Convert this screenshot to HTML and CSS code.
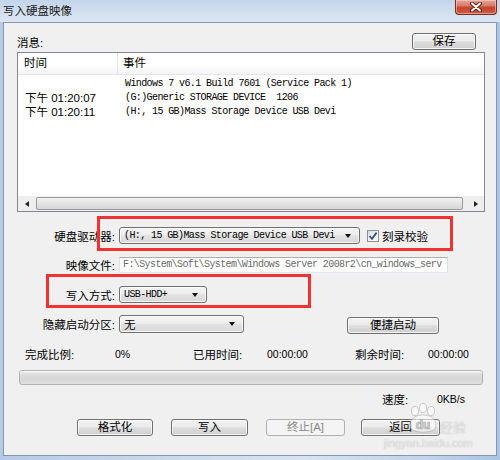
FILE: index.html
```html
<!DOCTYPE html>
<html>
<head>
<meta charset="utf-8">
<title>写入硬盘映像</title>
<link rel="stylesheet" href="styles.css">
</head>
<body>
<div class="window">
  <div class="titlebar">
    <span class="title">写入硬盘映像</span>
    <span class="close"><svg width="14" height="10" viewBox="0 0 14 10"><path d="M3 1.5 L11 8.5 M11 1.5 L3 8.5" stroke="#5a1a12" stroke-width="4" stroke-linecap="round"/><path d="M3 1.5 L11 8.5 M11 1.5 L3 8.5" stroke="#fff" stroke-width="2.2" stroke-linecap="round"/></svg></span>
  </div>
  <div class="client">
    <div class="msg-row">
      <span>消息:</span>
      <button class="btn btn-save">保存</button>
    </div>
    <div class="listbox">
      <div class="lv-head">
        <div class="col-time">时间</div>
        <div class="col-event">事件</div>
      </div>
      <div class="lv-body">
        <div class="lv-row"><div class="col-time"></div><div class="col-event mono">Windows 7 v6.1 Build 7601 (Service Pack 1)</div></div>
        <div class="lv-row"><div class="col-time">下午 01:20:07</div><div class="col-event mono">(G:)Generic STORAGE DEVICE  1206</div></div>
        <div class="lv-row"><div class="col-time">下午 01:20:11</div><div class="col-event mono">(H:, 15 GB)Mass Storage Device USB Devi</div></div>
      </div>
      <div class="hscroll">
        <span class="sarrow"><i class="tri-left"></i></span>
        <span class="thumb"></span>
        <span class="sarrow"><i class="tri-right"></i></span>
      </div>
    </div>

    <div class="frow r-drive">
      <span class="flabel">硬盘驱动器:</span>
      <div class="combo w-drive"><span class="mono">(H:, 15 GB)Mass Storage Device USB Devi</span><i class="caret"></i></div>
      <span class="check"><svg width="10" height="10" viewBox="0 0 10 10"><path d="M1.5 5 L4 7.8 L8.6 1.6" fill="none" stroke="#2f4f8f" stroke-width="1.8"/></svg></span>
      <span class="check-lbl">刻录校验</span>
    </div>
    <div class="frow r-image">
      <span class="flabel">映像文件:</span>
      <div class="textbox mono">F:\System\Soft\System\Windows Server 2008r2\cn_windows_serv</div>
    </div>
    <div class="frow r-mode">
      <span class="flabel">写入方式:</span>
      <div class="combo w-mode"><span class="mono">USB-HDD+</span><i class="caret"></i></div>
    </div>
    <div class="frow r-hide">
      <span class="flabel">隐藏启动分区:</span>
      <div class="combo w-hide"><span>无</span><i class="caret"></i></div>
      <button class="btn btn-quick">便捷启动</button>
    </div>

    <div class="stats">
      <span class="s1">完成比例:</span>
      <span class="s2 num">0%</span>
      <span class="s3">已用时间:</span>
      <span class="s4 num">00:00:00</span>
      <span class="s5">剩余时间:</span>
      <span class="s6 num">00:00:00</span>
    </div>
    <div class="progress"></div>
    <div class="speed">
      <span class="sp1">速度:</span>
      <span class="sp2 num">0KB/s</span>
    </div>
    <div class="actions">
      <button class="btn b-format">格式化</button>
      <button class="btn b-write">写入</button>
      <button class="btn b-stop" disabled>终止[A]</button>
      <button class="btn b-back">返回</button>
    </div>
  </div>

  <div class="mark mark1"></div>
  <div class="mark mark2"></div>

  <div class="watermark">
    <div class="wm-top">
      <span class="wm-paw"><svg width="34" height="30" viewBox="0 0 34 30"><g fill="rgba(255,255,255,0.55)" stroke="rgba(150,150,150,0.45)" stroke-width="1"><ellipse cx="9" cy="8" rx="3.5" ry="4.5"/><ellipse cx="17" cy="5" rx="3.5" ry="4.5"/><ellipse cx="25" cy="8" rx="3.5" ry="4.5"/><path d="M4 22 C4 14 12 12 17 12 C22 12 30 14 30 22 C30 28 24 29 17 29 C10 29 4 28 4 22 Z"/></g><text x="17" y="26" text-anchor="middle" class="wm-du">du</text></svg></span>
      <span class="wm-jy">经验</span>
    </div>
    <div class="wm-url">jingyan.baidu.com</div>
  </div>
</div>
</body>
</html>
```

FILE: styles.css
```css
* { box-sizing: border-box; }
html, body { margin: 0; padding: 0; }
body {
  width: 500px;
  height: 460px;
  overflow: hidden;
  font-family: "Liberation Sans", "Noto Sans CJK SC", sans-serif;
  font-size: 11.5px;
  color: #000;
  background: #c6d8ec;
}
.mono {
  font-family: "Liberation Mono", "Noto Sans CJK SC", monospace;
  font-size: 10px;
  letter-spacing: -0.6px;
  white-space: pre;
}
.window {
  width: 500px;
  height: 460px;
  position: relative;
  display: flex;
  flex-direction: column;
  background: linear-gradient(to right, #b4cbe4 0%, #cbdaeb 35%, #d7e3ef 60%, #c1d4e9 85%, #aac4e1 100%);
}
.titlebar {
  height: 22px;
  flex: none;
  display: flex;
  align-items: flex-start;
  background: linear-gradient(#c3d5ea, #d3e0ee 60%, #dce6f1);
}
.title {
  margin: 2px 0 0 3px;
  font-family: "Noto Sans CJK SC", sans-serif;
  font-size: 11.5px;
  line-height: 16px;
  color: #1a1a1a;
}
.close {
  margin-left: auto;
  margin-right: 3px;
  width: 42px;
  height: 15px;
  border: 1px solid #7a2a20;
  border-top: none;
  border-radius: 0 0 4px 4px;
  background: linear-gradient(#e6a598 0%, #d77a69 40%, #c4432f 55%, #cf5e45 100%);
  box-shadow: inset 0 0 0 1px rgba(255,220,210,0.5);
  display: flex;
  align-items: center;
  justify-content: center;
}
.client {
  flex: 1;
  margin: 0 3px 4px 3px;
  border: 1px solid #8696ab;
  background: #f0f0f0;
  display: flex;
  flex-direction: column;
}
.msg-row {
  margin-top: 10px;
  height: 17px;
  display: flex;
  align-items: center;
  padding: 0 20px 0 13px;
}
.btn {
  height: 17px;
  padding: 0;
  border: 1px solid #707070;
  border-radius: 3px;
  background: linear-gradient(#f2f2f2 0%, #ebebeb 45%, #dddddd 52%, #cfcfcf 100%);
  box-shadow: inset 0 0 0 1px rgba(255,255,255,0.75);
  font-family: "Liberation Sans", "Noto Sans CJK SC", sans-serif;
  font-size: 11.5px;
  line-height: 15px;
  color: #000;
}
.btn-save { margin-left: auto; width: 64px; }
.listbox {
  margin: 2px 0 0 13px;
  width: 468px;
  height: 160px;
  border: 1px solid #828790;
  background: #fff;
  display: flex;
  flex-direction: column;
}
.lv-head {
  height: 22px;
  flex: none;
  display: flex;
  background: linear-gradient(#ffffff 0%, #ffffff 55%, #f3f4f6 100%);
  border-bottom: 1px solid #e3e5e8;
}
.lv-head .col-time {
  width: 100px;
  padding-left: 6px;
  line-height: 21px;
  border-right: 1px solid #e2e3e5;
}
.lv-head .col-event {
  padding-left: 5px;
  line-height: 21px;
}
.lv-body { flex: 1; padding-top: 2px; }
.lv-row { display: flex; height: 14px; align-items: center; }
.lv-row .col-time { width: 100px; padding-left: 7px; line-height: 14px; white-space: nowrap; }
.lv-row .col-event { padding-left: 7px; line-height: 14px; }
.hscroll {
  height: 15px;
  flex: none;
  display: flex;
  align-items: stretch;
  background: #eeeeee;
}
.sarrow {
  width: 17px;
  display: flex;
  align-items: center;
  justify-content: center;
}
.tri-left { width: 0; height: 0; border-top: 3.5px solid transparent; border-bottom: 3.5px solid transparent; border-right: 4px solid #222; }
.tri-right { width: 0; height: 0; border-top: 3.5px solid transparent; border-bottom: 3.5px solid transparent; border-left: 4px solid #222; }
.thumb {
  flex: 1;
  margin: 1px 4px 1px 1px;
  border: 1px solid #9b9b9b;
  border-radius: 2px;
  background: linear-gradient(#f2f2f2, #e4e4e4 50%, #d5d5d5);
}
.frow {
  display: flex;
  align-items: center;
}
.flabel {
  width: 111px;
  margin-right: 4px;
  text-align: right;
  white-space: nowrap;
}
.r-drive { margin-top: 15px; height: 17px; }
.r-image { margin-top: 13px; height: 16px; }
.r-mode  { margin-top: 13px; height: 17px; }
.r-hide  { margin-top: 12px; height: 18px; }
.combo {
  height: 100%;
  display: flex;
  align-items: center;
  padding-left: 4px;
  border: 1px solid #707070;
  border-radius: 3px;
  background: linear-gradient(#f4f4f4 0%, #ededed 45%, #e2e2e2 52%, #d8d8d8 100%);
  box-shadow: inset 0 0 0 1px rgba(255,255,255,0.75);
  overflow: hidden;
}
.caret {
  margin-left: auto;
  margin-right: 8px;
  width: 0;
  height: 0;
  border-left: 3.5px solid transparent;
  border-right: 3.5px solid transparent;
  border-top: 4px solid #111;
}
.w-drive { width: 241px; }
.w-mode { width: 88px; }
.w-hide { width: 125px; }
.check {
  margin-left: 7px;
  width: 12px;
  height: 12px;
  border: 1px solid #8e8f8f;
  background: linear-gradient(135deg, #d9d9d9, #f5f5f5 60%, #ffffff);
  display: flex;
  align-items: center;
  justify-content: center;
}
.check-lbl { margin-left: 3px; }
.textbox {
  width: 329px;
  height: 16px;
  padding-left: 3px;
  border: 1px solid;
  border-color: #abadb3 #dbdfe6 #e3e9ef #e2e3ea;
  background: #fff;
  color: #6a6a6a;
  line-height: 14px;
  overflow: hidden;
}
.btn-quick { margin-left: 103px; width: 92px; height: 17px; margin-top: 2px; }
.stats {
  margin-top: 14px;
  height: 14px;
  display: flex;
  align-items: center;
  padding-left: 21px;
  white-space: nowrap;
}
.num { font-size: 10.5px; }
.s1 { width: 90px; }
.s2 { width: 78px; }
.s3 { width: 74px; }
.s4 { width: 88px; }
.s5 { width: 73px; }
.progress {
  margin: 9px 0 0 15px;
  width: 464px;
  height: 15px;
  border: 1px solid #b2b2b2;
  border-radius: 3px;
  background: linear-gradient(#f0f0f0 0%, #dcdcdc 30%, #d6d6d6 70%, #e2e2e2 100%);
  box-shadow: inset 0 1px 0 #fafafa;
}
.speed {
  margin-top: 7px;
  height: 14px;
  display: flex;
  align-items: center;
  padding-left: 378px;
}
.sp1 { width: 55px; }
.actions {
  margin-top: 13px;
  height: 17px;
  display: flex;
}
.b-format { margin-left: 73px; width: 76px; }
.b-write { margin-left: 18px; width: 77px; }
.b-stop {
  margin-left: 18px;
  width: 79px;
  border-color: #adb2b5;
  background: #f4f4f4;
  color: #8a8a8a;
  box-shadow: none;
}
.b-back { margin-left: 16px; width: 79px; }
.mark {
  position: absolute;
  border: 3px solid #f23232;
}
.mark1 { left: 97px; top: 216px; width: 356px; height: 35px; }
.mark2 { left: 46px; top: 274px; width: 265px; height: 34px; }
.watermark {
  position: absolute;
  left: 384px;
  top: 403px;
  width: 100px;
  color: rgba(255,255,255,0.6);
  text-shadow: 0 0 1px rgba(120,120,120,0.55);
  pointer-events: none;
}
.wm-top { display: flex; align-items: flex-end; padding-left: 22px; }
.wm-du {
  font-family: "Liberation Sans", sans-serif;
  font-weight: bold;
  font-size: 12px;
  fill: rgba(235,235,235,0.6);
  stroke: rgba(130,130,130,0.5);
  stroke-width: 0.6;
}
.wm-jy {
  font-family: "Noto Sans CJK SC", sans-serif;
  font-size: 13px;
  line-height: 16px;
  margin-left: 0;
}
.wm-url {
  font-family: "Liberation Sans", sans-serif;
  font-size: 11px;
  line-height: 12px;
  margin-top: 2px;
}
```
